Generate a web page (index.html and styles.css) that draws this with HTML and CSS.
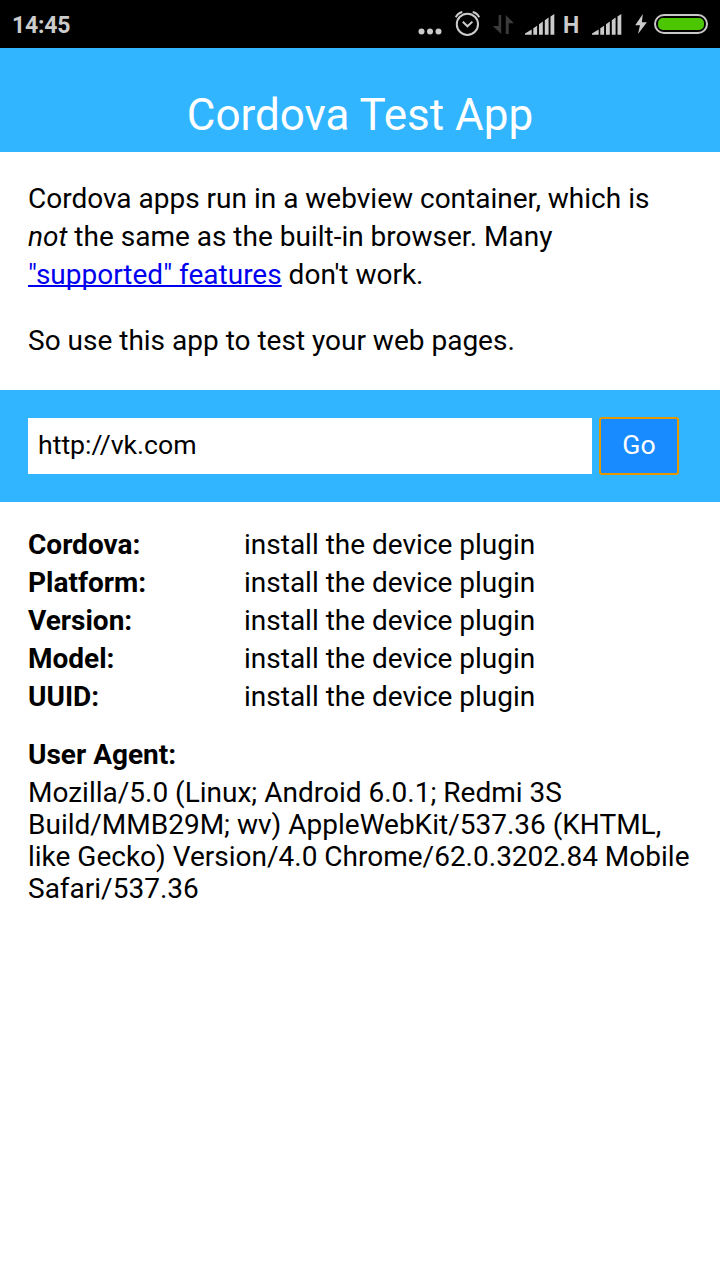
FILE: index.html
```html
<!DOCTYPE html>
<html lang="en">
<head>
<meta charset="utf-8">
<title>Cordova Test App</title>
<link rel="stylesheet" href="styles.css">
</head>
<body>
<div class="statusbar">
  <span class="clock">14:45</span>
  <div class="status-icons">
    <svg class="more" width="26" height="48" viewBox="417 0 26 48"><circle cx="421.5" cy="31.5" r="3"/><circle cx="430" cy="31.5" r="3"/><circle cx="438.5" cy="31.5" r="3"/></svg>
    <svg class="alarm" width="28" height="48" viewBox="454 0 28 48"><circle cx="467.4" cy="24.3" r="10.6"/><path d="M462.8 21.8l4.7 4.5 4.9-4.7M455.8 17.3q2-4.2 6.5-5.3M479.2 17.3q-2-4.2-6.5-5.3"/></svg>
    <svg class="transfer" width="22" height="48" viewBox="492 0 22 48"><path d="M498.6 15h2.6v19l-8.4-8h5.8zM505.8 34V15l8.2 8.2h-5.3V34z"/></svg>
    <svg class="signal" width="30" height="48" viewBox="525 0 30 48"><path d="M525 34.7v-1.2l6.7-4v5.2zM533.3 34.7v-6.4l3.8-2.6v9zM539 34.7V24.2l3.8-2.6v13.1zM544.8 34.7V20.2l3.8-2.6v17.1zM550.5 34.7V16.5l3.8-2.6v20.8z"/></svg>
    <span class="network">H</span>
    <svg class="signal second" width="30" height="48" viewBox="525 0 30 48"><path d="M525 34.7v-1.2l6.7-4v5.2zM533.3 34.7v-6.4l3.8-2.6v9zM539 34.7V24.2l3.8-2.6v13.1zM544.8 34.7V20.2l3.8-2.6v17.1zM550.5 34.7V16.5l3.8-2.6v20.8z"/></svg>
    <svg class="bolt" width="12" height="48" viewBox="635.5 0 12 48"><path d="M643.3 14l-7.6 11.3h4.8l-2 8.7 8.9-11.7h-5z"/></svg>
    <div class="battery"><div class="charge"></div></div>
  </div>
</div>
<header class="header"><h1 class="title">Cordova Test App</h1></header>
<section class="intro">
  <p>Cordova apps run in a webview container, which is <em>not</em> the same as the built-in browser. Many <a class="link" href="#">"supported" features</a> don't work.</p>
  <p>So use this app to test your web pages.</p>
</section>
<form class="address">
  <input class="url" type="text" value="http://vk.com">
  <button class="go" type="button">Go</button>
</form>
<section class="info">
  <dl class="details">
    <dt>Cordova:</dt><dd>install the device plugin</dd>
    <dt>Platform:</dt><dd>install the device plugin</dd>
    <dt>Version:</dt><dd>install the device plugin</dd>
    <dt>Model:</dt><dd>install the device plugin</dd>
    <dt>UUID:</dt><dd>install the device plugin</dd>
  </dl>
  <h2 class="agent-title">User Agent:</h2>
  <p class="agent">Mozilla/5.0 (Linux; Android 6.0.1; Redmi 3S Build/MMB29M; wv) AppleWebKit/537.36 (KHTML, like Gecko) Version/4.0 Chrome/62.0.3202.84 Mobile Safari/537.36</p>
</section>
</body>
</html>
```

FILE: styles.css
```css
* { box-sizing: border-box; }
body {
  margin: 0;
  min-height: 1280px;
  background: #fff;
  color: #000;
  font: 28px/38px Roboto, sans-serif;
}
h1, h2, p, dl, dd { margin: 0; }

.statusbar {
  display: flex;
  justify-content: space-between;
  height: 48px;
  padding: 0 12px;
  background: #000;
  color: #cbcbcb;
  fill: #cbcbcb;
}
.clock { font-size: 23px; font-weight: 700; letter-spacing: -0.2px; line-height: 52px; }
.status-icons { display: flex; align-items: center; height: 48px; }
.more { margin-right: 11px; }
.alarm { margin-right: 10px; fill: none; stroke: #cbcbcb; stroke-width: 2; }
.transfer { margin-right: 11px; fill: #3b3b3b; }
.network { width: 37px; padding: 4px 0 0 8px; font-size: 23px; font-weight: 700; line-height: 48px; }
.second { margin-right: 13px; }
.bolt { margin-right: 7px; }
.battery {
  width: 54px;
  height: 20px;
  padding: 2px;
  border: 2px solid #c8c8c8;
  border-radius: 10px;
}
.charge { width: 46px; height: 12px; border-radius: 5px; background: #4cc600; }

.header { height: 104px; padding-top: 41px; background: #32b5ff; }
.title {
  color: #fff;
  font-size: 44px;
  font-weight: 400;
  line-height: 52px;
  text-align: center;
}

.intro {
  display: flex;
  flex-direction: column;
  gap: 28px;
  height: 238px;
  padding: 28px 28px 0;
}
.link {
  color: #00e;
  text-decoration: underline;
  text-decoration-thickness: 2px;
  text-decoration-skip-ink: none;
}

.address {
  display: flex;
  align-items: center;
  gap: 7px;
  height: 112px;
  padding: 0 28px;
  background: #32b5ff;
}
.url {
  width: 564px;
  height: 56px;
  padding: 0 10px 2px;
  border: 0;
  background: #fff;
  color: #000;
  font: 26.667px Roboto, sans-serif;
}
.go {
  width: 80px;
  height: 58px;
  padding: 0 0 2px;
  border: 2px solid #e59700;
  border-radius: 3px;
  background: #178bff;
  color: #fff;
  font: 26.667px Roboto, sans-serif;
}

.info { padding: 24px 28px 0; }
.details { display: grid; grid-template-columns: 216px 1fr; }
.details dt { font-weight: 700; }
.agent-title { margin-top: 20px; font-size: 28px; font-weight: 700; line-height: 38px; }
.agent { margin-top: 3px; line-height: 32px; }
```
